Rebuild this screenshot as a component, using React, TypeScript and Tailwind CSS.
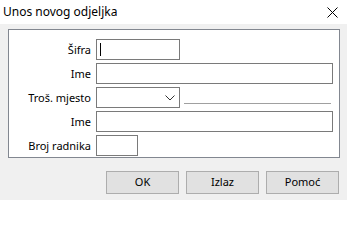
const FONT = "font-['Noto_Sans',_'Liberation_Sans',_sans-serif]"

function Label({ children }: { children: string }) {
  return <span className="w-[82px] shrink-0 text-right text-[11px] leading-none text-black">{children}</span>
}

function Box({ w, children }: { w: string; children?: React.ReactNode }) {
  return <div className={`${w} h-[21px] border border-[#7a7a7a] bg-white flex items-center`}>{children}</div>
}

export default function App() {
  return (
    <div className={`${FONT} w-[347px] h-[200px] bg-[#f0f0f0] flex flex-col overflow-hidden`}>
      {/* title bar */}
      <div className="h-[24px] bg-white flex items-center justify-between pl-[3px] pr-[9px]">
        <span className="text-[12px] text-black">Unos novog odjeljka</span>
        <svg width="11" height="11" viewBox="0 0 11 11" className="mt-[1px]">
          <path d="M0.5 0.5 L10.5 10.5 M10.5 0.5 L0.5 10.5" stroke="#000" strokeWidth="1" />
        </svg>
      </div>

      {/* group box */}
      <div className="ml-[8px] mt-[5px] w-[332px] h-[129px] border border-[#828790] bg-white pt-[9px] flex flex-col gap-[3px]">
        <div className="flex items-center gap-[5px]">
          <Label>Šifra</Label>
          <Box w="w-[84px]">
            <span className="ml-[3px] w-px h-[13px] bg-black" />
          </Box>
        </div>
        <div className="flex items-center gap-[5px]">
          <Label>Ime</Label>
          <Box w="w-[237px]" />
        </div>
        <div className="flex items-center gap-[5px]">
          <Label>Troš. mjesto</Label>
          <Box w="w-[84px]">
            <svg width="10" height="6" viewBox="0 0 10 6" className="ml-auto mr-[4px]">
              <path d="M0.5 0.5 L5 5 L9.5 0.5" fill="none" stroke="#333" strokeWidth="1" />
            </svg>
          </Box>
          <div className="-ml-px mt-[12px] w-[147px] h-px bg-[#a0a0a0]" />
        </div>
        <div className="flex items-center gap-[5px]">
          <Label>Ime</Label>
          <Box w="w-[237px]" />
        </div>
        <div className="flex items-center gap-[5px]">
          <Label>Broj radnika</Label>
          <Box w="w-[42px]" />
        </div>
      </div>

      {/* buttons */}
      <div className="mt-[13px] pr-[8px] flex justify-end gap-[7px]">
        {['OK', 'Izlaz', 'Pomoć'].map((t) => (
          <button
            key={t}
            className="w-[73px] h-[23px] border border-[#adadad] bg-[#e1e1e1] text-[11px] text-black flex items-center justify-center"
          >
            {t}
          </button>
        ))}
      </div>
    </div>
  )
}
